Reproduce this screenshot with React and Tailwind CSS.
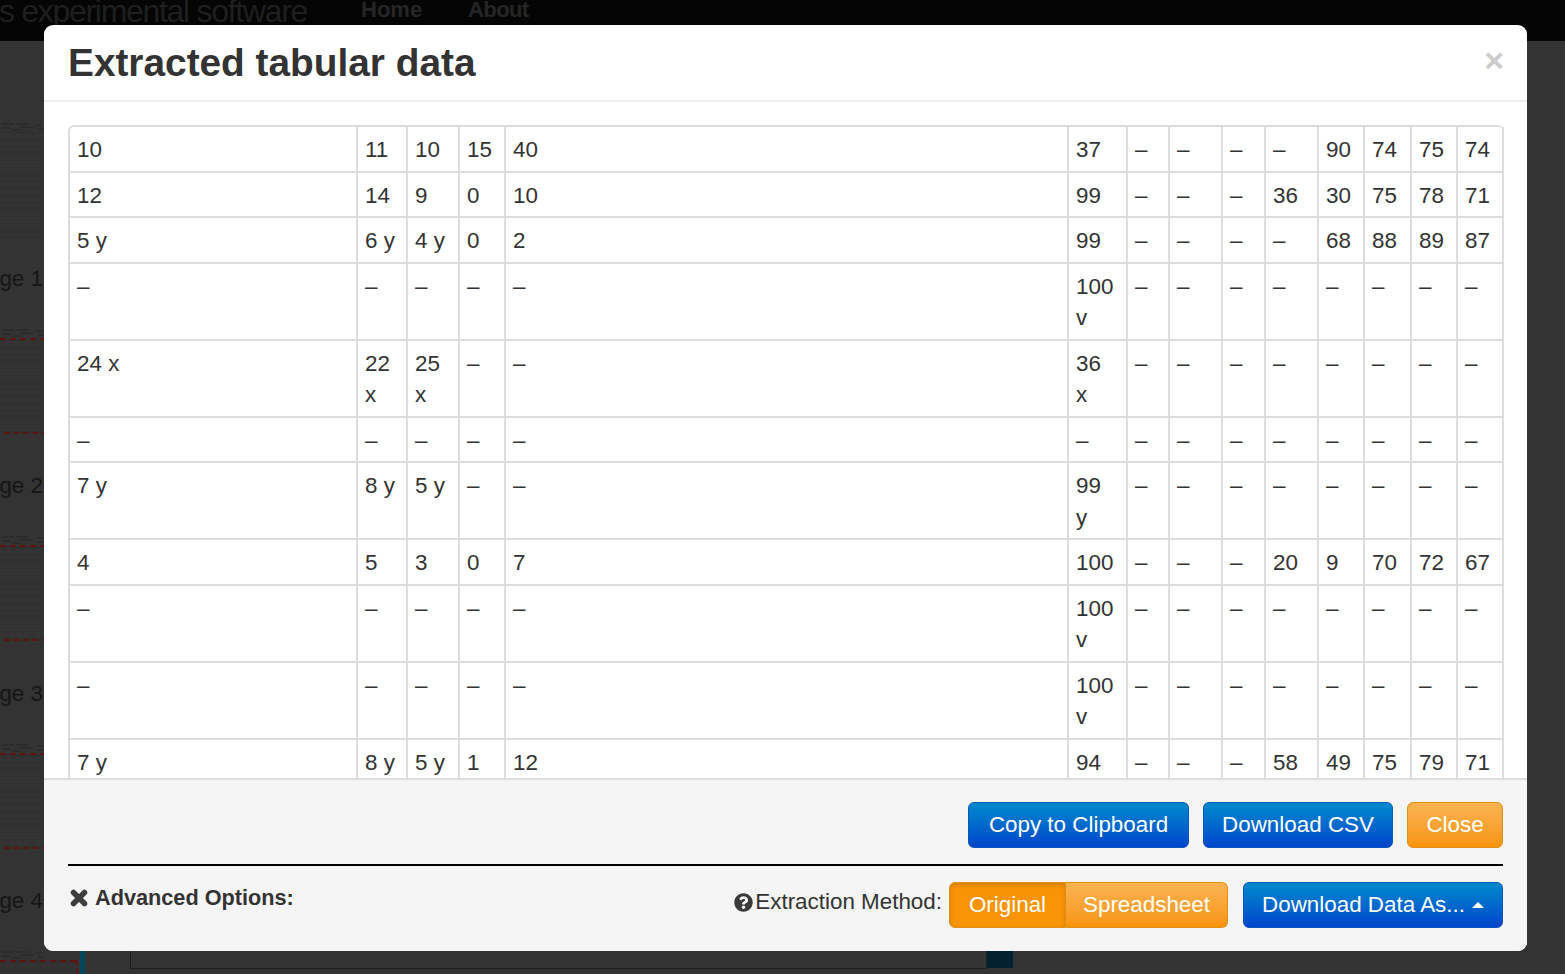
import React from 'react';
import { FaQuestionCircle } from 'react-icons/fa';

const rows = [
  ['10', '11', '10', '15', '40', '37', '–', '–', '–', '–', '90', '74', '75', '74'],
  ['12', '14', '9', '0', '10', '99', '–', '–', '–', '36', '30', '75', '78', '71'],
  ['5 y', '6 y', '4 y', '0', '2', '99', '–', '–', '–', '–', '68', '88', '89', '87'],
  ['–', '–', '–', '–', '–', '100 v', '–', '–', '–', '–', '–', '–', '–', '–'],
  ['24 x', '22 x', '25 x', '–', '–', '36 x', '–', '–', '–', '–', '–', '–', '–', '–'],
  ['–', '–', '–', '–', '–', '–', '–', '–', '–', '–', '–', '–', '–', '–'],
  ['7 y', '8 y', '5 y', '–', '–', '99 y', '–', '–', '–', '–', '–', '–', '–', '–'],
  ['4', '5', '3', '0', '7', '100', '–', '–', '–', '20', '9', '70', '72', '67'],
  ['–', '–', '–', '–', '–', '100 v', '–', '–', '–', '–', '–', '–', '–', '–'],
  ['–', '–', '–', '–', '–', '100 v', '–', '–', '–', '–', '–', '–', '–', '–'],
  ['7 y', '8 y', '5 y', '1', '12', '94', '–', '–', '–', '58', '49', '75', '79', '71'],
];

const blueBtn = 'h-[46px] rounded-[6px] border border-[#0a55b8] bg-gradient-to-b from-[#0088cc] to-[#0044cc] text-white';
const orangeBtn = 'h-[46px] border border-[#e08e1c] bg-gradient-to-b from-[#fbb450] to-[#f89406] text-white';

// the tiny dimmed page thumbnails behind the backdrop
const Thumb = ({ height }) => (
  <svg width="76" height={height} className="block">
    <defs>
      <pattern id="thumbdots" width="9" height="7" patternUnits="userSpaceOnUse">
        <rect width="9" height="1" fill="#2e2e2e" />
        <rect x="5" width="1" height="7" fill="#303030" />
      </pattern>
    </defs>
    <rect width="76" height={height} fill="url(#thumbdots)" />
  </svg>
);

const ThumbHead = () => (
  <svg width="76" height="10" className="block">
    <path d="M2 2h12M16 2h12M20 5h14M36 3h6M2 6h8M12 8h10M38 7h6" stroke="#262626" strokeWidth="1" fill="none" />
  </svg>
);

const PageStub = ({ label }) => (
  <div className="h-[207.3px] shrink-0">
    <div className="pt-[25px] -ml-[28px] text-[22.4px] leading-[32px] whitespace-nowrap text-[#151515]">{label}</div>
    <div className="mt-[33px]">
      <ThumbHead />
    </div>
    <div className="border-t-2 border-dashed border-[#5c1414]" />
    <Thumb height={92} />
    <div className="ml-[4px] border-t-2 border-dashed border-[#5c1414]" />
  </div>
);

const RemoveIcon = () => (
  <svg width="18" height="18" viewBox="0 0 18 18" className="shrink-0">
    <path d="M3.5 3.5l11 11M14.5 3.5l-11 11" stroke="#3d3d3d" strokeWidth="5.5" strokeLinecap="round" fill="none" />
  </svg>
);

const App = () => {
  return (
    <div className="relative h-[974px] w-[1565px] overflow-hidden bg-[#333333] font-['Liberation_Sans',Arial,sans-serif]">
      {/* page behind the backdrop */}
      <div className="h-[41px] bg-[#050505] flex items-start overflow-hidden text-[#1f1f1f]">
        <div className="-mt-[7px] -ml-[1px] w-[362px] text-[32px] leading-[36px] font-light tracking-[-1.3px] whitespace-nowrap">s experimental software</div>
        <div className="-mt-[5px] w-[107px] text-[22px] leading-[30px] font-bold text-[#252525]">Home</div>
        <div className="-mt-[5px] text-[22px] leading-[30px] font-bold tracking-[-0.6px] text-[#252525]">About</div>
      </div>
      <div className="flex flex-col w-[76px] overflow-hidden">
        <div className="mt-[81px] h-[116px] overflow-hidden">
          <ThumbHead />
          <Thumb height={106} />
        </div>
        <PageStub label="Page 1" />
        <PageStub label="Page 2" />
        <PageStub label="Page 3" />
        <PageStub label="Page 4" />
      </div>

      {/* modal */}
      <div className="absolute left-[44px] top-[25px] w-[1483px] h-[926px] bg-white rounded-[9px] overflow-hidden flex flex-col">
        <div className="h-[77px] shrink-0 border-b-2 border-[#eeeeee] px-[24px] flex items-center justify-between">
          <h3 className="text-[38.8px] leading-[44px] font-bold text-[#333333] mt-[1px]">Extracted tabular data</h3>
          <span className="text-[34px] leading-[34px] font-bold text-[#cccccc] -mt-[6px] mr-[-1px]">×</span>
        </div>
        <div className="h-[676px] shrink-0 overflow-hidden px-[24px] pt-[23px]">
          <table className="w-[1435px] table-fixed border-separate border-spacing-0 rounded-[6px] border-t-2 border-l-2 border-[#dddddd] text-[22.4px] leading-[31.4px] text-[#333333]">
            <colgroup>
              <col className="w-[288px]" />
              <col className="w-[50px]" />
              <col className="w-[52px]" />
              <col className="w-[46px]" />
              <col className="w-[563px]" />
              <col className="w-[59px]" />
              <col className="w-[42px]" />
              <col className="w-[53px]" />
              <col className="w-[43px]" />
              <col className="w-[53px]" />
              <col className="w-[46px]" />
              <col className="w-[47px]" />
              <col className="w-[46px]" />
              <col className="w-[46px]" />
            </colgroup>
            <tbody>
              {rows.map((row, i) => (
                <tr key={i}>
                  {row.map((cell, j) => (
                    <td key={j} className="border-r-2 border-b-2 border-[#dddddd] pl-[7px] pr-[10px] pt-[7px] pb-[5.2px] align-top">
                      {cell}
                    </td>
                  ))}
                </tr>
              ))}
            </tbody>
          </table>
        </div>
        <div className="flex-1 border-t-2 border-[#dddddd] bg-[#f5f5f5] px-[24px] pt-[22px]">
          <div className="flex justify-end gap-[14px] text-[22.4px]">
            <button className={`${blueBtn} w-[221px]`}>Copy to Clipboard</button>
            <button className={`${blueBtn} w-[190px]`}>Download CSV</button>
            <button className={`${orangeBtn} w-[96px] rounded-[6px]`}>Close</button>
          </div>
          <div className="mt-[16px] border-t-2 border-black" />
          <div className="mt-[16px] flex items-start justify-between">
            <div className="flex items-center gap-[7px] pl-[2px] text-[21.7px] leading-[32px] font-bold text-[#333333]">
              <RemoveIcon />
              <span>Advanced Options:</span>
            </div>
            <div className="flex items-start text-[22.4px]">
              <div className="flex items-center h-[40px]">
                <FaQuestionCircle className="text-[#3a3a3a] text-[19px]" />
                <span className="ml-[2px] mr-[7px] text-[#333333]">Extraction Method:</span>
              </div>
              <div className="flex">
                <button className="h-[46px] w-[117px] rounded-l-[6px] border border-[#e08e1c] bg-[#f89406] text-white shadow-[inset_0_2px_4px_rgba(0,0,0,0.15)]">Original</button>
                <button className={`${orangeBtn} w-[162px] rounded-r-[6px] border-l-0`}>Spreadsheet</button>
              </div>
              <button className={`${blueBtn} w-[260px] ml-[15px] flex items-center justify-center gap-[7px]`}>
                Download Data As...
                <span className="w-0 h-0 border-x-[6.5px] border-x-transparent border-b-[6.5px] border-b-white" />
              </button>
            </div>
          </div>
        </div>
      </div>

      {/* bits of the page under the modal */}
      <div className="absolute left-[76px] top-[960px] h-[14px] border-l-2 border-dashed border-[#5c1414]" />
      <div className="absolute left-[130px] top-[951px] w-[857px] h-[18px] border-x border-b border-[#1f1f1f]" />
      <div className="absolute left-[987px] top-[951px] w-[26px] h-[17px] bg-[#02222f]" />
      <div className="absolute left-[80px] top-[951px] w-[5px] h-[23px] bg-[#06455c]" />
    </div>
  );
};

export default App;
